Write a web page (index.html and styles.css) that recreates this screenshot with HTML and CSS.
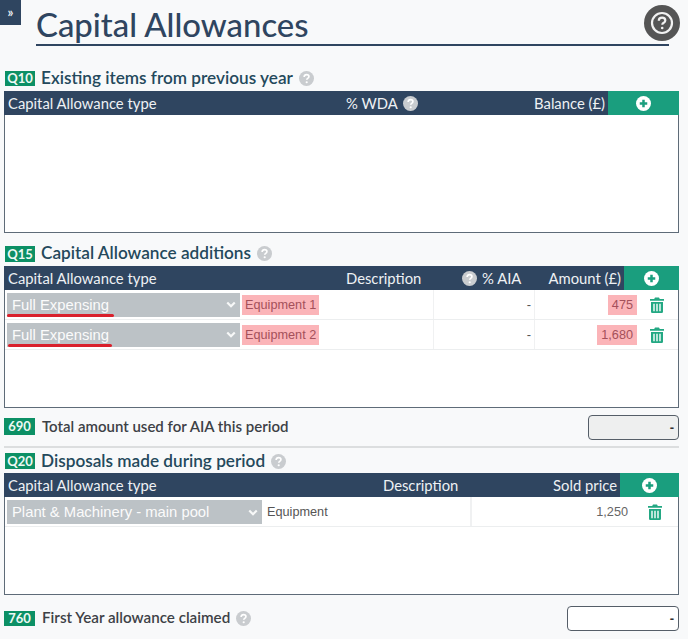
FILE: index.html
```html
<!DOCTYPE html>
<html lang="en">
<head>
<meta charset="utf-8">
<title>Capital Allowances</title>
<link rel="stylesheet" href="styles.css">
</head>
<body>
<svg class="defs" width="0" height="0" aria-hidden="true">
  <symbol id="i-help" viewBox="0 0 24 24">
    <circle cx="12" cy="12" r="12" fill="currentColor"/>
    <path d="M8.200 9.400c0-2.300 1.700-3.700 3.900-3.700s3.800 1.300 3.800 3.200c0 1.500-.9 2.300-2 3-1 .6-1.600 1.100-1.600 2.200" fill="none" stroke="#fff" stroke-width="2.600"/>
    <circle cx="12.300" cy="18" r="1.700" fill="#fff"/>
  </symbol>
  <symbol id="i-plus" viewBox="0 0 24 24">
    <circle cx="12" cy="12" r="12" fill="#fff"/>
    <path d="M12 6v12M6 12h12" stroke="#1a9e7e" stroke-width="4"/>
  </symbol>
  <symbol id="i-trash" viewBox="0 0 14 16">
    <path d="M0 2h4.200L5 .6h4l.8 1.400H14v1.800H0zM1 5h12v9.400c0 .9-.7 1.600-1.600 1.600H2.600C1.700 16 1 15.300 1 14.400zM3.300 6.800v7.400h1.400V6.800zM6.300 6.800v7.400h1.400V6.800zM9.300 6.800v7.400h1.400V6.800z" fill="currentColor" fill-rule="evenodd"/>
  </symbol>
  <symbol id="i-chev" viewBox="0 0 12 8">
    <path d="M1.500 1.500 6 6l4.500-4.500" fill="none" stroke="currentColor" stroke-width="2.600"/>
  </symbol>
</svg>

<a class="toggle">»</a>
<main class="page">
  <header class="title-row">
    <h1 class="title">Capital Allowances</h1>
    <span class="big-help"><svg viewBox="0 0 36 36"><circle cx="18" cy="18" r="10" fill="none" stroke="#f2f2f2" stroke-width="2.200"/><path d="M14.800 15.800c0-2 1.400-3.100 3.300-3.100s3.200 1.100 3.200 2.700c0 1.200-.7 1.800-1.600 2.400-.9.500-1.400 1-1.400 1.900" fill="none" stroke="#f2f2f2" stroke-width="2.200"/><circle cx="18.200" cy="23" r="1.300" fill="#f2f2f2"/></svg></span>
  </header>

  <div class="heading h-q10">
    <span class="badge">Q10</span>
    <h2 class="heading-text">Existing items from previous year</h2>
    <svg class="hint"><use href="#i-help"/></svg>
  </div>
  <section class="tbl tbl-tall">
    <div class="thead cols-q10">
      <span class="th">Capital Allowance type</span>
      <span class="th">% WDA <svg class="hint-head"><use href="#i-help"/></svg></span>
      <span class="th th-right">Balance (£)</span>
      <span class="add"><svg class="plus"><use href="#i-plus"/></svg></span>
    </div>
  </section>

  <div class="heading h-q15">
    <span class="badge badge-low">Q15</span>
    <h2 class="heading-text">Capital Allowance additions</h2>
    <svg class="hint"><use href="#i-help"/></svg>
  </div>
  <section class="tbl tbl-tall">
    <div class="thead cols-q15">
      <span class="th">Capital Allowance type</span>
      <span class="th">Description</span>
      <span class="th"><svg class="hint-head"><use href="#i-help"/></svg> % AIA</span>
      <span class="th th-right">Amount (£)</span>
      <span class="add"><svg class="plus"><use href="#i-plus"/></svg></span>
    </div>
    <div class="row rows-q15">
      <div class="cell cell-select">
        <div class="select"><span>Full Expensing</span><svg class="chev"><use href="#i-chev"/></svg></div>
        <i class="scribble scribble-a"></i>
      </div>
      <div class="cell cell-desc"><span class="flag">Equipment 1</span></div>
      <div class="cell cell-num sep"><span class="dash">-</span></div>
      <div class="cell cell-num"><span class="flag flag-num">475</span></div>
      <div class="cell cell-act"><svg class="trash"><use href="#i-trash"/></svg></div>
    </div>
    <div class="row rows-q15">
      <div class="cell cell-select">
        <div class="select"><span>Full Expensing</span><svg class="chev"><use href="#i-chev"/></svg></div>
        <i class="scribble scribble-b"></i>
      </div>
      <div class="cell cell-desc"><span class="flag">Equipment 2</span></div>
      <div class="cell cell-num sep"><span class="dash">-</span></div>
      <div class="cell cell-num"><span class="flag flag-num">1,680</span></div>
      <div class="cell cell-act"><svg class="trash"><use href="#i-trash"/></svg></div>
    </div>
  </section>

  <div class="field f-690">
    <span class="badge badge-num badge-690">690</span>
    <span class="field-label">Total amount used for AIA this period</span>
    <span class="amount amount-readonly">-</span>
  </div>
  <hr class="rule">

  <div class="heading h-q20">
    <span class="badge badge-q20">Q20</span>
    <h2 class="heading-text">Disposals made during period</h2>
    <svg class="hint"><use href="#i-help"/></svg>
  </div>
  <section class="tbl tbl-short">
    <div class="thead cols-q20">
      <span class="th">Capital Allowance type</span>
      <span class="th">Description</span>
      <span class="th th-right">Sold price</span>
      <span class="add"><svg class="plus"><use href="#i-plus"/></svg></span>
    </div>
    <div class="row rows-q20">
      <div class="cell cell-select">
        <div class="select"><span>Plant &amp; Machinery - main pool</span><svg class="chev"><use href="#i-chev"/></svg></div>
      </div>
      <div class="cell cell-desc sep"><span class="plain">Equipment</span></div>
      <div class="cell cell-num"><span class="plain-num">1,250</span></div>
      <div class="cell cell-act"><svg class="trash"><use href="#i-trash"/></svg></div>
    </div>
  </section>

  <div class="field f-760">
    <span class="badge badge-num">760</span>
    <span class="field-label field-label-760">First Year allowance claimed</span>
    <svg class="hint"><use href="#i-help"/></svg>
    <span class="amount amount-wide">-</span>
  </div>
</main>
</body>
</html>
```
FILE: styles.css
```css
* { box-sizing: border-box; }
html, body { margin: 0; padding: 0; }
body {
  background: #f8f9fa;
  font-family: Lato, "Open Sans", sans-serif;
  color: #333;
  height: 639px;
  overflow: hidden;
  position: relative;
}
.defs { position: absolute; }
.toggle {
  position: absolute;
  left: 0;
  top: 0;
  width: 21px;
  height: 25px;
  background: #2f4560;
  color: #e8edf2;
  font-size: 13px;
  font-weight: 700;
  line-height: 24px;
  text-align: center;
}
.page { padding: 0 9px 0 4px; }

.title-row {
  height: 46px;
  margin: 0 10px 0 32px;
  border-bottom: 2px solid #2f4560;
  position: relative;
}
.title {
  margin: 0;
  font-size: 32.900px;
  font-weight: 500;
  line-height: 44px;
  height: 44px;
  padding-top: 3px;
  color: #2f4560;
  white-space: nowrap;
}
.big-help {
  position: absolute;
  right: -11px;
  top: 5px;
  width: 36px;
  height: 36px;
  border-radius: 50%;
  background: #555;
  display: flex;
}
.big-help svg { width: 36px; height: 36px; }

.heading {
  height: 20px;
  display: flex;
  align-items: center;
}
.h-q10 { margin: 22px 0 3px; }
.h-q15 { margin: 10px 0 3px; }
.h-q20 { margin: 3px 0 2px; }
.heading-text {
  margin: 0 0 2px;
  font-size: 17.200px;
  font-weight: 600;
  color: #24495c;
  white-space: nowrap;
}
.badge {
  width: 30px;
  height: 15px;
  margin: 0 6px 0 1px;
  background: #0c9065;
  color: #eef9f4;
  font-size: 13px;
  font-weight: 700;
  line-height: 15px;
  text-align: center;
  flex: none;
}
.badge-low { height: 16px; line-height: 16px; margin-top: 2px; }
.badge-q20 { height: 16px; line-height: 16px; }
.badge-num { width: 31px; margin-left: 0; margin-right: 7px; }
.badge-690 { height: 17px; line-height: 17px; margin-bottom: 3px; }
.hint {
  width: 15px;
  height: 15px;
  margin-left: 6px;
  color: #c9cccf;
  flex: none;
}

.tbl {
  border: 1px solid #5e6b78;
  background: #fff;
}
.tbl-tall { height: 142px; }
.tbl-short { height: 122px; }

.thead {
  display: grid;
  align-items: center;
  height: 24px;
  margin: -1px -1px 0;
  background: #2f4560;
}
.cols-q10 { grid-template-columns: 342px 120px 1fr 71px; }
.cols-q15 { grid-template-columns: 342px 116px 62px 1fr 55px; }
.cols-q20 { grid-template-columns: 379px 1fr 130px 59px; }
.th {
  color: #eef1f4;
  font-size: 14.800px;
  line-height: 24px;
  display: flex;
  align-items: center;
  gap: 5px;
  white-space: nowrap;
}
.th:first-child { padding-left: 4px; }
.th-right { justify-content: flex-end; padding-right: 3px; }
.hint-head { width: 15px; height: 15px; color: #c9cccf; flex: none; }
.add {
  height: 24px;
  background: #1a9e7e;
  display: flex;
  align-items: center;
  justify-content: center;
}
.plus { width: 15px; height: 15px; }

.row {
  display: grid;
  height: 30px;
  align-items: stretch;
  border-bottom: 1px solid #eceeef;
}
.rows-q15 { grid-template-columns: 236px 192px 101px 104px 40px; }
.rows-q20 { grid-template-columns: 258px 208px 161px 46px; }
.rows-q15 .cell-act { padding-right: 3px; }
.rows-q20 .cell { padding-top: 1px; }
.cell {
  display: flex;
  align-items: center;
  position: relative;
  min-width: 0;
}
.cell-select { padding: 0 1px 0 2px; }
.cell-desc { padding-left: 1px; }
.cell-num { justify-content: flex-end; border-left: 1px solid #f0f1f2; }
.cell-act { justify-content: center; }
.sep { border-left: 1px solid #f0f1f2; }
.cell-desc.sep { border-left: 0; border-right: 1px solid #f0f1f2; }

.select {
  flex: 1;
  height: 24px;
  background: #bcc2c6;
  color: #fbfbfb;
  font-family: "Liberation Sans", Arial, sans-serif;
  font-size: 14.800px;
  display: flex;
  align-items: center;
  justify-content: space-between;
  padding: 0 4px 0 5px;
  white-space: nowrap;
}
.chev { width: 10px; height: 7px; color: #f7f8f8; }

.flag {
  background: #fbb4b8;
  color: #a4505a;
  font-family: "Liberation Sans", Arial, sans-serif;
  font-size: 12.700px;
  line-height: 20px;
  padding: 0 3px;
}
.flag-num { margin-right: 1px; padding: 0 4px; }
.dash { color: #555; font-family: "Liberation Sans", Arial, sans-serif; font-size: 13px; padding-right: 3px; }
.plain {
  color: #555;
  font-family: "Liberation Sans", Arial, sans-serif;
  font-size: 12.700px;
  padding-left: 3px;
}
.plain-num {
  color: #666;
  font-family: "Liberation Sans", Arial, sans-serif;
  font-size: 12.700px;
  padding-right: 4px;
}
.trash { width: 14px; height: 16px; color: #23a883; }

.scribble {
  position: absolute;
  height: 3px;
  background: #d9202c;
  border-radius: 2px;
}
.scribble-a { left: 2px; width: 107px; top: 24px; }
.scribble-b { left: 3px; width: 104px; top: 24px; }

.field {
  display: flex;
  align-items: center;
  height: 25px;
}
.f-690 { margin-top: 7px; }
.f-760 { margin-top: 11px; }
.field-label {
  font-size: 15px;
  font-weight: 600;
  color: #3d4146;
  margin-bottom: 4px;
}
.field-label-760 { font-size: 15.200px; margin-bottom: 3px; }
.amount {
  margin-left: auto;
  height: 25px;
  border: 1px solid #555e68;
  border-radius: 4px;
  background: #fff;
  color: #333;
  font-family: "Liberation Sans", Arial, sans-serif;
  font-size: 13px;
  font-weight: 700;
  line-height: 23px;
  text-align: right;
  padding-right: 4px;
}
.amount-readonly { width: 91px; background: #eeefef; }
.amount-wide { width: 112px; }
.rule {
  margin: 6px 0 0;
  height: 2px;
  border: 0;
  background: #dcdedf;
}
```
